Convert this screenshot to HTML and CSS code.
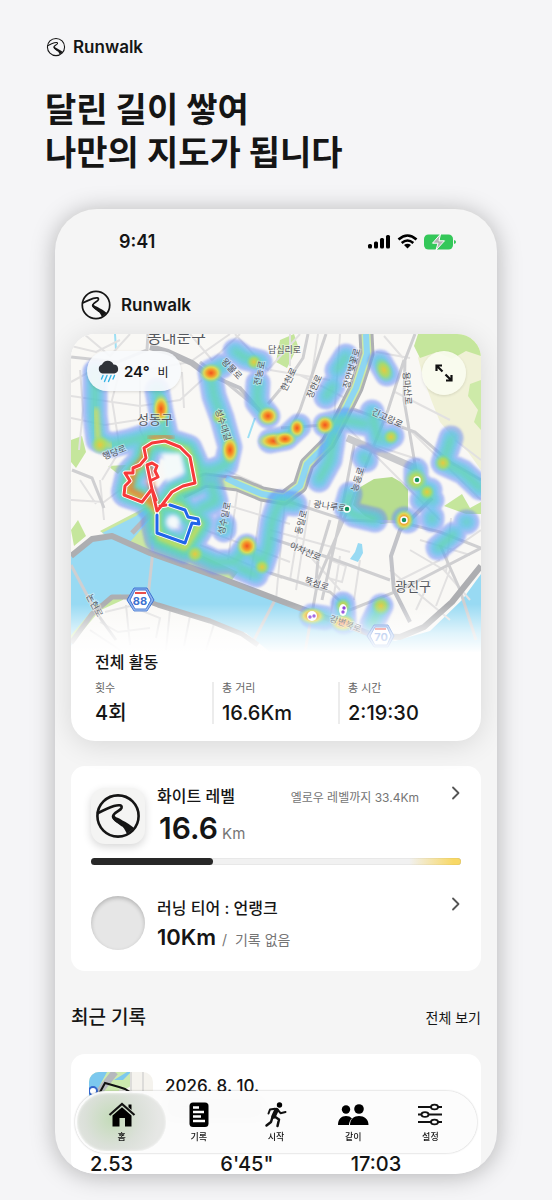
FILE: index.html
```html
<!DOCTYPE html>
<html lang="ko">
<head>
    <meta charset="UTF-8">
    <meta name="viewport" content="width=device-width, initial-scale=1.0">
    <title>Runwalk</title>
    <link rel="stylesheet" href="styles.css">
</head>
<body>
    <!-- Shared symbols -->
    <svg class="symbols" aria-hidden="true">
        <symbol id="logo" viewBox="0 0 48 48">
            <circle cx="24" cy="24" r="20.6" fill="none" stroke="currentColor" stroke-width="2.6"/>
            <path d="M4 21C10 18 15 15.500 20 14C25 12.500 28.500 13 27.500 16C26.500 19 19 20.500 19 24.500C19 27.500 24 29.500 28 33" fill="none" stroke="currentColor" stroke-width="2.600" stroke-linecap="round"/>
            <path d="M18 23C18 28 22 30 26 32.500C29 34.500 31 37.500 33 42L40 36C35 31.500 31 30 27 27.500C24 25.500 21 25.500 20.500 23Z" fill="currentColor"/>
        </symbol>
        <symbol id="chevron" viewBox="0 0 10 14">
            <path d="M2 1.500L7.500 7L2 12.500" fill="none" stroke="currentColor" stroke-width="1.800" stroke-linecap="round" stroke-linejoin="round"/>
        </symbol>
    </svg>

    <main class="page">
        <div class="brand">
            <svg class="brand-logo" aria-hidden="true"><use href="#logo"/></svg>
            <span>Runwalk</span>
        </div>
        <h1 class="headline">달린 길이 쌓여<br>나만의 지도가 됩니다</h1>

        <div class="phone">
            <div class="status">
                <span class="clock">9:41</span>
                <svg class="status-icons" viewBox="0 0 90 18" aria-hidden="true">
                    <rect x="1" y="11" width="4" height="4.500" rx="1.500"/>
                    <rect x="7" y="8.500" width="4" height="7" rx="1.500"/>
                    <rect x="13" y="5" width="4" height="10.500" rx="1.500"/>
                    <rect x="19" y="2" width="4" height="13.500" rx="1.500"/>
                    <g fill="none" stroke="#000" stroke-width="2.600">
                        <path d="M31.500 6.500Q40.500 -1.500 49.500 6.500"/>
                        <path d="M34.700 10Q40.500 5 46.300 10"/>
                    </g>
                    <path d="M37 12Q40.500 9.300 44 12L40.500 15.600Z"/>
                    <rect x="57" y="1.500" width="29" height="15" rx="4.500" fill="#34c759"/>
                    <path d="M87 7v4q2 -.500 2 -2t-2 -2Z" fill="#34c759"/>
                    <path d="M73.500 1L65.500 10.200H71L69 17L77.500 7.800H72Z" fill="#b3b3b3" stroke="#fff" stroke-width="1"/>
                </svg>
            </div>

            <header class="app-header">
                <svg class="app-logo" aria-hidden="true"><use href="#logo"/></svg>
                <span>Runwalk</span>
            </header>

            <section class="card map-card">
                <svg class="map" viewBox="71 334 410 318" role="img" aria-label="활동 지도">
                    <defs>
                        <linearGradient id="fade" x1="0" y1="0" x2="0" y2="1">
                            <stop offset="0" stop-color="#fff" stop-opacity="0"/>
                            <stop offset=".6" stop-color="#fff" stop-opacity=".7"/>
                            <stop offset="1" stop-color="#fff"/>
                        </linearGradient>
                        <radialGradient id="hot">
                            <stop offset="0" stop-color="#f2521f"/>
                            <stop offset=".35" stop-color="#f59a2a"/>
                            <stop offset=".6" stop-color="#e5dc4c" stop-opacity=".9"/>
                            <stop offset="1" stop-color="#7fdc8c" stop-opacity="0"/>
                        </radialGradient>
                        <radialGradient id="warm">
                            <stop offset="0" stop-color="#e8c840"/>
                            <stop offset=".5" stop-color="#b5dc58" stop-opacity=".8"/>
                            <stop offset="1" stop-color="#7fdc9c" stop-opacity="0"/>
                        </radialGradient>
                        <filter id="edge" x="-10%" y="-10%" width="120%" height="120%"><feGaussianBlur stdDeviation="1"/></filter>
                        <filter id="soft" x="-10%" y="-10%" width="120%" height="120%"><feGaussianBlur stdDeviation="2"/></filter>
                        <filter id="softer" x="-10%" y="-10%" width="120%" height="120%"><feGaussianBlur stdDeviation="3"/></filter>
                        <path id="trails" d="M95 372V415L98 440L112 445L130 441L152 434M157 390L161 412L166 434M210 372L214 396L222 418L230 447L226 465L212 471L196 470M210 372L222 366M235 351L245 358L260 362M258 383L257 402L268 416M270 441L286 438L299 426M325 425L345 420L366 424M346 356L337 370M333 386L326 397M380 362L387 374M372 412L378 440M392 436L386 440M334 434L330 460L319 480M364 457L366 460M451 438L443 463L463 472L480 488M416 470V480L427 492L432 500M346 508L354 515L375 520M404 519L408 521M430 490L422 500M432 517V520M466 522H467M438 548L454 534M312 616L325 618M343 604L344 622M381 606L372 624M280 502L295 504M346 508L350 494M200 509L216 501L211 484M224 525V530M197 553L215 562L235 562L247 546L262 566L268 548L272 522L279 503M240 568L256 575"/>
                        <path id="loop" d="M155 440L146 449L143 462L131 475L127 492L145 498L157 512L157 525L160 538L185 548L200 524L187 514L180 506L166 504L176 491L196 484L193 464L187 450L165 443Z"/>
                        <path id="red-run" d="M157 511L152 489L142 502L124 495L125 486L130 481L125 473L133 473L133 468L140 465L146 458L144 448L152 443L165 441L180 447L190 457L195 483L183 486L172 492L162 505L157 511M166 505L160 506M152 489L147 465L152 463L157 466L155 471L158 477L152 480M152 489L156 500"/>
                        <path id="blue-run" d="M157 515V533L185 543L192 523L199 524L198 519L188 517L185 510L170 505"/>
                    </defs>

                    <!-- Land, parks and water -->
                    <rect x="71" y="334" width="410" height="318" fill="#f9f8f5"/>
                    <path d="M430 334H481V470L468 452L455 440L440 422L432 402L424 380L418 358Z" fill="#f0f1d7"/>
                    <path d="M418 334H481V356L466 351L452 359L437 352L420 358L414 346Z" fill="#c5e69c"/>
                    <path d="M470 384L481 380V430L474 422L478 410L468 396Z" fill="#cdeaa8"/>
                    <path d="M357 489L374 479L392 477L408 486V510L396 522L381 524L365 516L353 505Z" fill="#b7dd8f"/>
                    <path d="M444 506L462 494L470 508L481 502V514H466L455 510Z" fill="#c5e69c"/>
                    <path d="M280 340L294 334L298 346L287 368L276 362ZM71 440L82 436L86 452L76 468L71 462ZM71 530L78 520L86 536L74 546ZM108 466L126 465L118 474Z" fill="#c5e69c"/>
                    <path d="M100 531L148 506L156 520L150 535L190 550L238 572L232 580L170 562L120 546Z" fill="#cbe7a2"/>
                    <path d="M71 553L92 539L112 536L150 553L215 576L281 603L340 624L395 641L430 631L462 600L481 574V652H270L246 633L200 619L150 602L122 597L98 609L71 646Z" fill="#98daf3"/>
                    <path d="M71 640L98 608L122 597" fill="none" stroke="#c6e79e" stroke-width="6"/>
                    <path d="M102 533L136 516L152 505L160 510L146 524L130 542Z" fill="#98daf3"/>
                    <path d="M358 543L362 544L363 553L358 562L350 559L355 552Z" fill="#98daf3"/>
                    <path d="M115 334L116 350M255 418L248 438" fill="none" stroke="#9ddff4" stroke-width="2"/>

                    <!-- Minor streets -->
                    <g fill="none" stroke="#e2e1e1" stroke-width="2">
                        <path d="M71 382L100 366L145 370L190 362L230 334M71 396L140 406L180 400L202 380M71 418L105 425L150 418M84 334L110 356L130 334M71 346L96 352L120 340M120 370L112 400L120 450L102 480M80 370L83 410L79 450M140 370V430L150 450M182 372L184 408M190 334L212 360L240 334M235 334L268 370L300 334M300 375L345 398M270 370L330 380M290 334V366M318 334L312 374M340 334L334 420M376 352L410 358M384 336L403 358M395 392L450 420M340 420L440 520M358 440L420 460M455 440L481 460M410 430L481 500"/>
                        <path d="M71 500L104 502L120 490M100 480L104 520M80 480L96 504M225 470L262 486M238 486L228 560M262 498L250 580M230 506L290 524M205 530L290 562M200 545L282 578M285 500L276 600M300 520L290 580M270 530L350 552M300 545L340 590M310 500L296 590M340 556L330 620M360 560L354 600M330 560L346 566L342 582L328 578ZM390 570L450 620M396 582L440 560M430 580L416 610M450 570L436 606M445 555L481 530M420 540L470 555M410 550L444 570L470 600M451 518L446 572"/>
                        <path d="M105 612L130 606L160 618L156 638M126 605L130 645M100 622L118 632L150 628M170 610L166 650M190 616L184 646M214 624L206 650M90 630L120 650"/>
                    </g>
                    <!-- Main streets -->
                    <g fill="none" stroke="#cfcfd1" stroke-width="3">
                        <path d="M148 334L147 350L118 362L71 357M72 470L92 478L104 508M308 334L303 358L288 380L268 404M326 334L300 410L285 440M415 334L405 360L404 400L416 470M404 360L388 410L352 500L318 580L305 652M345 406L415 432L450 462L481 480M281 428L325 425M200 362L228 384L262 412M229 480L290 502L345 520L400 522L440 532L481 548M270 538L330 558L390 580M270 573L330 592L350 610L400 590L481 548M330 520L318 560L316 582M355 440L340 520L322 600M440 545L460 590L476 640"/>
                        <path d="M71 565L96 612L116 640M153 540L152 560L147 606M275 600L254 640"/>
                    </g>
                    <!-- Stream with expressways on both sides -->
                    <g fill="none" stroke-linejoin="round">
                        <path d="M366 334L367 354L356 388L342 416L328 443L307 464L300 486L284 498L262 494L238 484L205 480L181 492" stroke="#aeb0b4" stroke-width="15"/>
                        <path d="M366 334L367 354L356 388L342 416L328 443L307 464L300 486L284 498L262 494L238 484L205 480L181 492" stroke="#cdeaa8" stroke-width="9"/>
                        <path d="M366 334L367 354L356 388L342 416L328 443L307 464L300 486L284 498L262 494L238 484L226 478" stroke="#8ed6f2" stroke-width="6"/>
                        <path d="M150 347L168 352L192 363L208 375" stroke="#b7b8bc" stroke-width="6"/>
                        <path d="M210 375L240 388L268 420" stroke="#c2c3c8" stroke-width="4"/>
                        <path d="M347 438L415 468" stroke="#c9cacd" stroke-width="7"/>
                        <path d="M432 498L400 530L391 556L394 590L410 622" stroke="#c2c3c8" stroke-width="4"/>
                        <path d="M71 556L92 539L112 536L150 553L215 576L281 601L340 623L376 636L400 637L424 627L452 602L481 566" stroke="#adaeb1" stroke-width="6"/>
                        <path d="M71 643L92 614L112 597L136 597L158 605L210 621L242 634L258 645" stroke="#adaeb1" stroke-width="5"/>
                        <path d="M132 533L154 510" stroke="#b7b8bc" stroke-width="5"/>
                    </g>

                    <!-- Heat layers, cold to hot -->
                    <g fill="none" stroke-linecap="round" stroke-linejoin="round">
                        <g filter="url(#edge)" opacity=".5" stroke="#6f86f7">
                            <use href="#trails" stroke-width="25"/>
                            <use href="#loop" stroke-width="32"/>
                        </g>
                        <g filter="url(#soft)" opacity=".55" stroke="#49cdee">
                            <use href="#trails" stroke-width="17"/>
                            <use href="#loop" stroke-width="24"/>
                        </g>
                        <g filter="url(#softer)" opacity=".75" stroke="#62e096">
                            <use href="#trails" stroke-width="6"/>
                            <use href="#loop" stroke-width="16"/>
                        </g>
                        <use href="#loop" stroke="#e8dd3f" stroke-width="5" opacity=".8" filter="url(#soft)"/>
                        <path d="M96 410L98 440L110 446" stroke="#e3e052" stroke-width="5" opacity=".8" filter="url(#soft)"/>
                        <path d="M146 448L144 458L134 470L130 490L146 498L157 508L151 484L150 468" stroke="#f3722c" stroke-width="6" opacity=".75" filter="url(#soft)"/>
                        <path d="M150 438L164 436L172 438" stroke="#f3722c" stroke-width="4" opacity=".8" filter="url(#soft)"/>
                    </g>
                    <g fill="url(#hot)">
                        <ellipse cx="161" cy="409" rx="9" ry="16"/>
                        <ellipse cx="211" cy="373" rx="12" ry="10"/>
                        <ellipse cx="230" cy="450" rx="9" ry="15"/>
                        <ellipse cx="268" cy="416" rx="11" ry="10"/>
                        <ellipse cx="274" cy="441" rx="17" ry="9"/>
                        <ellipse cx="285" cy="439" rx="12" ry="8"/>
                        <ellipse cx="297" cy="428" rx="8" ry="10"/>
                        <ellipse cx="325" cy="425" rx="10" ry="10"/>
                        <ellipse cx="247" cy="546" rx="11" ry="11"/>
                        <ellipse cx="404" cy="520" rx="10" ry="11"/>
                        <ellipse cx="312" cy="616" rx="14" ry="9"/>
                        <ellipse cx="343" cy="623" rx="13" ry="9"/>
                    </g>
                    <g fill="url(#warm)">
                        <ellipse cx="384" cy="370" rx="9" ry="13" transform="rotate(-25 384 370)"/>
                        <circle cx="100" cy="445" r="10"/>
                        <circle cx="254" cy="362" r="8"/>
                        <circle cx="219" cy="417" r="8"/>
                        <circle cx="443" cy="463" r="9"/>
                        <circle cx="416" cy="480" r="12"/>
                        <circle cx="427" cy="492" r="8"/>
                        <circle cx="381" cy="606" r="10"/>
                        <circle cx="195" cy="554" r="9"/>
                        <circle cx="262" cy="567" r="8"/>
                        <circle cx="391" cy="437" r="8"/>
                        <circle cx="343" cy="606" r="8"/>
                    </g>
                    <!-- Gaps inside the loops -->
                    <g filter="url(#soft)">
                        <path d="M161 453L181 453L185 473L166 482Z" fill="#f4fafa"/>
                        <circle cx="173" cy="522" r="7" fill="#f4fafa"/>
                    </g>

                    <!-- Area names -->
                    <g class="map-label">
                        <text x="147" y="343" font-size="16">동대문구</text>
                        <text x="137" y="424" font-size="13">성동구</text>
                        <text x="395" y="591" font-size="13">광진구</text>
                        <g font-size="9">
                            <text x="268" y="353">답십리로</text>
                            <text transform="translate(221 362) rotate(46)">왕물로</text>
                            <text transform="translate(260 386) rotate(-78)">전농로</text>
                            <text transform="translate(286 392) rotate(-64)">한천로</text>
                            <text transform="translate(312 399) rotate(-65)">장한로</text>
                            <text transform="translate(349 389) rotate(-74)">장안벚꽃로</text>
                            <text transform="translate(403 372) rotate(86)">용마산로</text>
                            <text transform="translate(371 414) rotate(25)">긴고랑로</text>
                            <text transform="translate(357 492) rotate(-72)">능동로</text>
                            <text transform="translate(104 460) rotate(-22)">행당로</text>
                            <text transform="translate(215 410) rotate(72)">성수대길</text>
                            <text transform="translate(224 535) rotate(-78)">성수일로</text>
                            <text transform="translate(301 535) rotate(-75)">동일로</text>
                            <text transform="translate(313 507) rotate(8)">광나루로</text>
                            <text transform="translate(289 548) rotate(23)">아차산로</text>
                            <text transform="translate(304 583) rotate(18)">뚝섬로</text>
                            <text transform="translate(86 596) rotate(62)">논현로</text>
                            <text transform="translate(329 621) rotate(20)">강변북로</text>
                        </g>
                    </g>

                    <!-- Recorded routes -->
                    <g fill="none" stroke-linejoin="round" stroke-linecap="round">
                        <use href="#red-run" stroke="#fff" stroke-width="5"/>
                        <use href="#red-run" stroke="#f73a3a" stroke-width="3"/>
                        <use href="#blue-run" stroke="#fff" stroke-width="5"/>
                        <use href="#blue-run" stroke="#2165ea" stroke-width="3"/>
                    </g>

                    <!-- Spots -->
                    <g stroke="#fff" stroke-width="1.500" fill="#14935f">
                        <circle cx="347" cy="509" r="3"/>
                        <circle cx="404" cy="520" r="3"/>
                        <circle cx="417" cy="480" r="3"/>
                    </g>
                    <circle cx="312" cy="616" r="5" fill="#fff"/>
                    <ellipse cx="343" cy="610" rx="4" ry="6" fill="#fff"/>
                    <g fill="#8431d8">
                        <circle cx="310" cy="617" r="1.700"/>
                        <circle cx="314" cy="616" r="1.700"/>
                        <circle cx="343" cy="612" r="1.700"/>
                        <circle cx="344" cy="608" r="1.700"/>
                    </g>

                    <!-- Road shields -->
                    <g class="shield">
                        <path class="shield-rim" d="M127 600L134 588H147L154 600L147 611H134Z"/>
                        <path d="M130 600L135 590H146L151 600L146 609H135Z"/>
                        <path d="M135 593H146" stroke="#e8504c" stroke-width="2"/>
                        <text x="140" y="605">88</text>
                    </g>
                    <g class="shield">
                        <path class="shield-rim" d="M367 636L374 625H388L394 636L388 647H374Z"/>
                        <path d="M370 636L375 627H387L391 636L387 645H375Z"/>
                        <path d="M375 629H386" stroke="#e8504c" stroke-width="2"/>
                        <text x="381" y="641">70</text>
                    </g>
                    <rect x="71" y="604" width="410" height="49" fill="url(#fade)"/>
                </svg>

                <div class="weather">
                    <svg class="weather-icon" viewBox="0 0 24 24" aria-hidden="true">
                        <path d="M6.500 14.500A4.600 4.600 0 0 1 6 5.600A6.300 6.300 0 0 1 17.500 5.400A4.600 4.600 0 0 1 18.500 14.500Z" fill="#2f3238"/>
                        <path d="M7 16.500L5.500 20M11 16.500L8.500 22.500M15 16.500L12.500 22.500M18.500 16.500L17 20" stroke="#35b4e5" stroke-width="1.400" stroke-linecap="round"/>
                    </svg>
                    <strong>24°</strong>
                    <span>비</span>
                </div>
                <button class="expand" type="button" aria-label="지도 확대">
                    <svg viewBox="0 0 20 20" fill="none" stroke="#111" stroke-width="2.200" aria-hidden="true">
                        <path d="M8.500 8.500L3 3M2.500 8V2.500H8M11.500 11.500L17 17M17.500 12V17.500H12"/>
                    </svg>
                </button>

                <div class="activity">
                    <h2>전체 활동</h2>
                    <dl class="totals">
                        <div><dt>횟수</dt><dd>4회</dd></div>
                        <div><dt>총 거리</dt><dd>16.6Km</dd></div>
                        <div><dt>총 시간</dt><dd>2:19:30</dd></div>
                    </dl>
                </div>
            </section>

            <section class="card level-card">
                <a class="level" href="#level">
                    <span class="badge"><svg aria-hidden="true"><use href="#logo"/></svg></span>
                    <span class="level-text">
                        <span class="level-name">화이트 레벨</span>
                        <span class="level-value"><b>16.6</b> Km</span>
                    </span>
                    <span class="level-next">옐로우 레벨까지 33.4Km</span>
                    <svg class="chevron" aria-hidden="true"><use href="#chevron"/></svg>
                </a>
                <div class="progress" role="progressbar" aria-label="레벨 진행" aria-valuenow="33" aria-valuemin="0" aria-valuemax="100">
                    <div class="progress-bar" style="width: 33%"></div>
                </div>
                <a class="level tier" href="#tier">
                    <span class="tier-badge"></span>
                    <span class="level-text">
                        <span class="level-name">러닝 티어 : 언랭크</span>
                        <span class="tier-value"><b>10Km</b> /&nbsp; 기록 없음</span>
                    </span>
                    <svg class="chevron" aria-hidden="true"><use href="#chevron"/></svg>
                </a>
            </section>

            <div class="section-head">
                <h2>최근 기록</h2>
                <a href="#all">전체 보기</a>
            </div>

            <article class="card record">
                <div class="record-top">
                    <svg class="thumb" viewBox="0 0 64 64" aria-hidden="true">
                        <rect width="64" height="64" fill="#f5f3ee"/>
                        <path d="M0 0H42V14L20 26L0 50Z" fill="#cce9ae"/>
                        <path d="M0 0H18L4 26H0ZM25 8L38 0H42L34 8Z" fill="#7cc8ee"/>
                        <path d="M26 0L2 30" stroke="#b5b8bd" stroke-width="7"/>
                        <path d="M42 0V64M54 0V64M30 18L64 24" stroke="#dddcda" stroke-width="2"/>
                        <path d="M10 22L16 11L30 15L36 17L44 22" fill="none" stroke="#111" stroke-width="2"/>
                        <circle cx="4" cy="19" r="4" fill="#fff" stroke="#3566cc" stroke-width="2"/>
                    </svg>
                    <div>
                        <time datetime="2026-08-10">2026. 8. 10.</time>
                        <div class="record-place"></div>
                    </div>
                </div>
                <div class="record-stats">
                    <span>2.53</span>
                    <span>6'45"</span>
                    <span>17:03</span>
                </div>
            </article>

            <nav class="tabs">
                <a class="active" href="#home" aria-current="page">
                    <svg viewBox="0 0 28 28" aria-hidden="true">
                        <path d="M20.500 3.500H23.500V9L20.500 6.300Z"/>
                        <path d="M1.500 14L14 3L26.500 14" fill="none" stroke="#111" stroke-width="2.200"/>
                        <path d="M4.500 14.500L14 6.300L23.500 14.500V25.500H17V17H11.500V25.500H4.500Z"/>
                    </svg>
                    홈
                </a>
                <a href="#records">
                    <svg viewBox="0 0 28 28" aria-hidden="true">
                        <rect x="4.500" y="1.500" width="19" height="24.500" rx="3.500"/>
                        <path d="M8 6.500H14M8 11H19M8 15.500H16M8 20H20" stroke="#fff" stroke-width="2.500"/>
                    </svg>
                    기록
                </a>
                <a href="#start">
                    <svg viewBox="0 0 28 28" aria-hidden="true">
                        <circle cx="17.500" cy="4" r="2.700"/>
                        <g fill="none" stroke="#111" stroke-linecap="round" stroke-linejoin="round">
                            <path d="M14.500 9L11.500 15.500" stroke-width="4.500"/>
                            <path d="M13 7.800L8 8.500L6.500 12.500M15.500 8.500L18.500 12.200L23.500 11" stroke-width="2"/>
                            <path d="M12.500 15.500L17 18.500L15.500 25M10.500 16L9 21L4.500 24.500" stroke-width="2.500"/>
                        </g>
                    </svg>
                    시작
                </a>
                <a href="#together">
                    <svg class="wide" viewBox="0 0 32 28" aria-hidden="true">
                        <circle cx="9" cy="8.500" r="4.200"/>
                        <circle cx="22" cy="8" r="4.800"/>
                        <path d="M1 24C1 18 4.500 15 9 15C11.500 15 13.500 15.800 15 17.500C13 19 12 21.500 12 24Z"/>
                        <path d="M13 24C13 18 17 15 22 15S31.500 18 31.500 24Z"/>
                    </svg>
                    같이
                </a>
                <a href="#settings">
                    <svg viewBox="0 0 28 28" aria-hidden="true">
                        <path d="M2 6H26M2 13.500H26M2 21H26" stroke="#111" stroke-width="2"/>
                        <g fill="#fff" stroke="#111" stroke-width="1.800">
                            <ellipse cx="18.500" cy="6" rx="3.500" ry="2.400"/>
                            <ellipse cx="9" cy="13.500" rx="3.500" ry="2.400"/>
                            <ellipse cx="18.500" cy="21" rx="3.500" ry="2.400"/>
                        </g>
                    </svg>
                    설정
                </a>
            </nav>
        </div>
    </main>
</body>
</html>
```
FILE: styles.css
```css
* {
    box-sizing: border-box;
}

body {
    margin: 0;
    background: #f5f5f7;
    color: #151515;
    font-family: Inter, "Noto Sans CJK KR", sans-serif;
}

h1, h2, dl, dd {
    margin: 0;
}

a {
    color: inherit;
    text-decoration: none;
}

svg {
    display: block;
}

.symbols {
    position: absolute;
    width: 0;
    height: 0;
}

.page {
    padding: 36px 55px 28px;
    overflow: hidden;
}

.brand {
    display: flex;
    align-items: center;
    gap: 6px;
    margin-left: -10px;
    font-size: 17px;
    font-weight: 600;
    line-height: 22px;
}

.brand-logo {
    width: 22px;
    height: 20px;
}

.headline {
    margin: 30px 0 35px -10px;
    font-size: 34px;
    font-weight: 700;
    line-height: 43px;
    white-space: nowrap;
}

.phone {
    position: relative;
    padding: 0 16px;
    background: #f5f5f5;
    border-radius: 42px;
    box-shadow: 0 2px 24px rgba(0, 0, 0, 0.28);
    overflow: hidden;
}

.status {
    display: flex;
    justify-content: space-between;
    align-items: center;
    padding: 22px 24px 0 48px;
}

.clock {
    font-size: 18px;
    font-weight: 600;
    line-height: 22px;
}

.status-icons {
    width: 90px;
    height: 18px;
}

.app-header {
    display: flex;
    align-items: center;
    gap: 9px;
    padding: 36px 9px 13px;
    font-size: 17px;
    font-weight: 600;
    line-height: 32px;
}

.app-logo {
    width: 32px;
    height: 32px;
}

.card {
    background: #fff;
    border-radius: 14px;
}

/* Map */

.map-card {
    position: relative;
    border-radius: 24px;
    box-shadow: 0 4px 28px rgba(0, 0, 0, 0.12);
}

.map {
    width: 100%;
    height: auto;
    border-radius: 24px 24px 0 0;
}

.map-label {
    fill: #55585e;
    stroke: #fff;
    stroke-width: 2px;
    stroke-opacity: 0.4;
    paint-order: stroke;
}

.shield {
    fill: #fff;
    stroke: #3d72d0;
    stroke-width: 1px;
}

.shield-rim {
    fill: #8eb4f0;
}

.shield text {
    fill: #3d72d0;
    stroke: none;
    font-size: 11px;
    font-weight: 700;
    text-anchor: middle;
}

.weather {
    position: absolute;
    top: 17px;
    left: 16px;
    display: flex;
    align-items: center;
    gap: 4px;
    height: 40px;
    padding: 0 12px 0 9px;
    background: rgba(247, 250, 252, 0.92);
    border-radius: 20px;
    box-shadow: 0 1px 3px rgba(0, 0, 0, 0.12);
    font-size: 12px;
}

.weather strong {
    margin-right: 4px;
    font-size: 15px;
    font-weight: 600;
}

.weather-icon {
    width: 24px;
    height: 24px;
}

.expand {
    position: absolute;
    top: 17px;
    right: 15px;
    display: grid;
    place-items: center;
    width: 44px;
    height: 44px;
    padding: 0;
    background: rgba(250, 252, 240, 0.92);
    border: 0;
    border-radius: 50%;
    box-shadow: 0 1px 3px rgba(0, 0, 0, 0.12);
}

.expand svg {
    width: 20px;
    height: 20px;
}

.activity {
    padding: 0 8px 17px 24px;
}

.activity h2 {
    font-size: 16px;
    font-weight: 500;
    line-height: 20px;
}

.totals {
    display: grid;
    grid-template-columns: repeat(3, 1fr);
    margin-top: 10px;
}

.totals div {
    height: 42px;
}

.totals div + div {
    margin-left: -9px;
    padding-left: 8px;
    border-left: 2px solid #ececec;
}

.totals dt {
    color: #666;
    font-size: 11px;
    line-height: 12px;
}

.totals dd {
    margin-top: 6px;
    font-size: 20px;
    font-weight: 500;
    line-height: 26px;
}

/* Level and tier */

.level-card {
    margin-top: 25px;
    padding: 18px 20px 14px;
}

.level {
    display: flex;
    align-items: flex-start;
}

.badge {
    display: grid;
    place-items: center;
    width: 54px;
    height: 56px;
    margin-top: 4px;
    background: #f4f4f3;
    border-radius: 14px;
    box-shadow: 0 3px 8px rgba(0, 0, 0, 0.16);
}

.badge svg {
    width: 48px;
    height: 48px;
}

.level-text {
    display: flex;
    flex-direction: column;
    margin-left: 12px;
}

.level-name {
    font-size: 16px;
    font-weight: 500;
    line-height: 24px;
}

.level-value {
    padding-left: 2px;
    color: #757575;
    font-size: 15px;
    line-height: 40px;
}

.level-value b {
    color: #151515;
    font-size: 30px;
    font-weight: 600;
}

.level-next {
    margin-left: auto;
    color: #757575;
    font-size: 12px;
    line-height: 28px;
}

.chevron {
    width: 10px;
    height: 14px;
    margin: 2px 0 0 32px;
    color: #555;
}

.progress {
    height: 7px;
    margin-top: 9px;
    background: linear-gradient(90deg, #f1f1f1 86%, #f8d866 98%);
    border-radius: 4px;
    box-shadow: inset 0 0 1px rgba(0, 0, 0, 0.35);
}

.level + .progress {
    margin-top: 4px;
}

.progress-bar {
    height: 100%;
    background: #282828;
    border-radius: 4px;
}

.tier {
    margin-top: 31px;
}

.tier .chevron {
    margin: 1px 0 0 auto;
}

.tier-badge {
    width: 54px;
    height: 54px;
    background: #e6e6e6;
    border-radius: 50%;
    box-shadow: inset 0 2px 4px rgba(0, 0, 0, 0.22);
}

.tier-value {
    color: #757575;
    font-size: 14px;
    line-height: 34px;
}

.tier-value b {
    margin-right: 2px;
    color: #151515;
    font-size: 22px;
    font-weight: 600;
}

/* Recent records */

.section-head {
    display: flex;
    justify-content: space-between;
    align-items: center;
    padding: 32px 0 22px;
    line-height: 29px;
}

.section-head h2 {
    font-size: 19px;
    font-weight: 500;
}

.section-head a {
    font-size: 14px;
}

.record {
    padding-top: 18px;
}

.record-top {
    display: flex;
    gap: 12px;
    padding: 0 18px;
}

.thumb {
    width: 64px;
    height: 64px;
    border-radius: 10px;
}

.record time {
    font-size: 17px;
    font-weight: 500;
    line-height: 28px;
}

.record-place {
    width: 100px;
    height: 18px;
    background: #ccc;
}

.record-stats {
    display: grid;
    grid-template-columns: repeat(3, 1fr);
    padding: 18px 0 0 19px;
    font-size: 20px;
    font-weight: 500;
    line-height: 20px;
}

/* Floating tab bar */

.tabs {
    position: absolute;
    right: 20px;
    bottom: 21px;
    left: 20px;
    display: grid;
    grid-template-columns: repeat(5, 1fr);
    padding: 2px 8px;
    background: rgba(252, 252, 252, 0.93);
    border-radius: 31px;
    box-shadow: 0 0 2px rgba(0, 0, 0, 0.3);
    backdrop-filter: blur(8px);
}

.tabs a {
    display: flex;
    flex-direction: column;
    align-items: center;
    margin: 0 -6px;
    padding: 8px 0 7px;
    border-radius: 29px;
    font-size: 9px;
    font-weight: 500;
    line-height: 15px;
}

.tabs svg {
    width: 28px;
    height: 28px;
}

.tabs svg.wide {
    width: 32px;
}

.tabs .active {
    background: radial-gradient(circle at 40% 45%, #c3dbb8, #dbe0d9 45%, #e6e7e5 75%);
    box-shadow: inset 0 0 3px rgba(255, 255, 255, 0.9);
}
```
